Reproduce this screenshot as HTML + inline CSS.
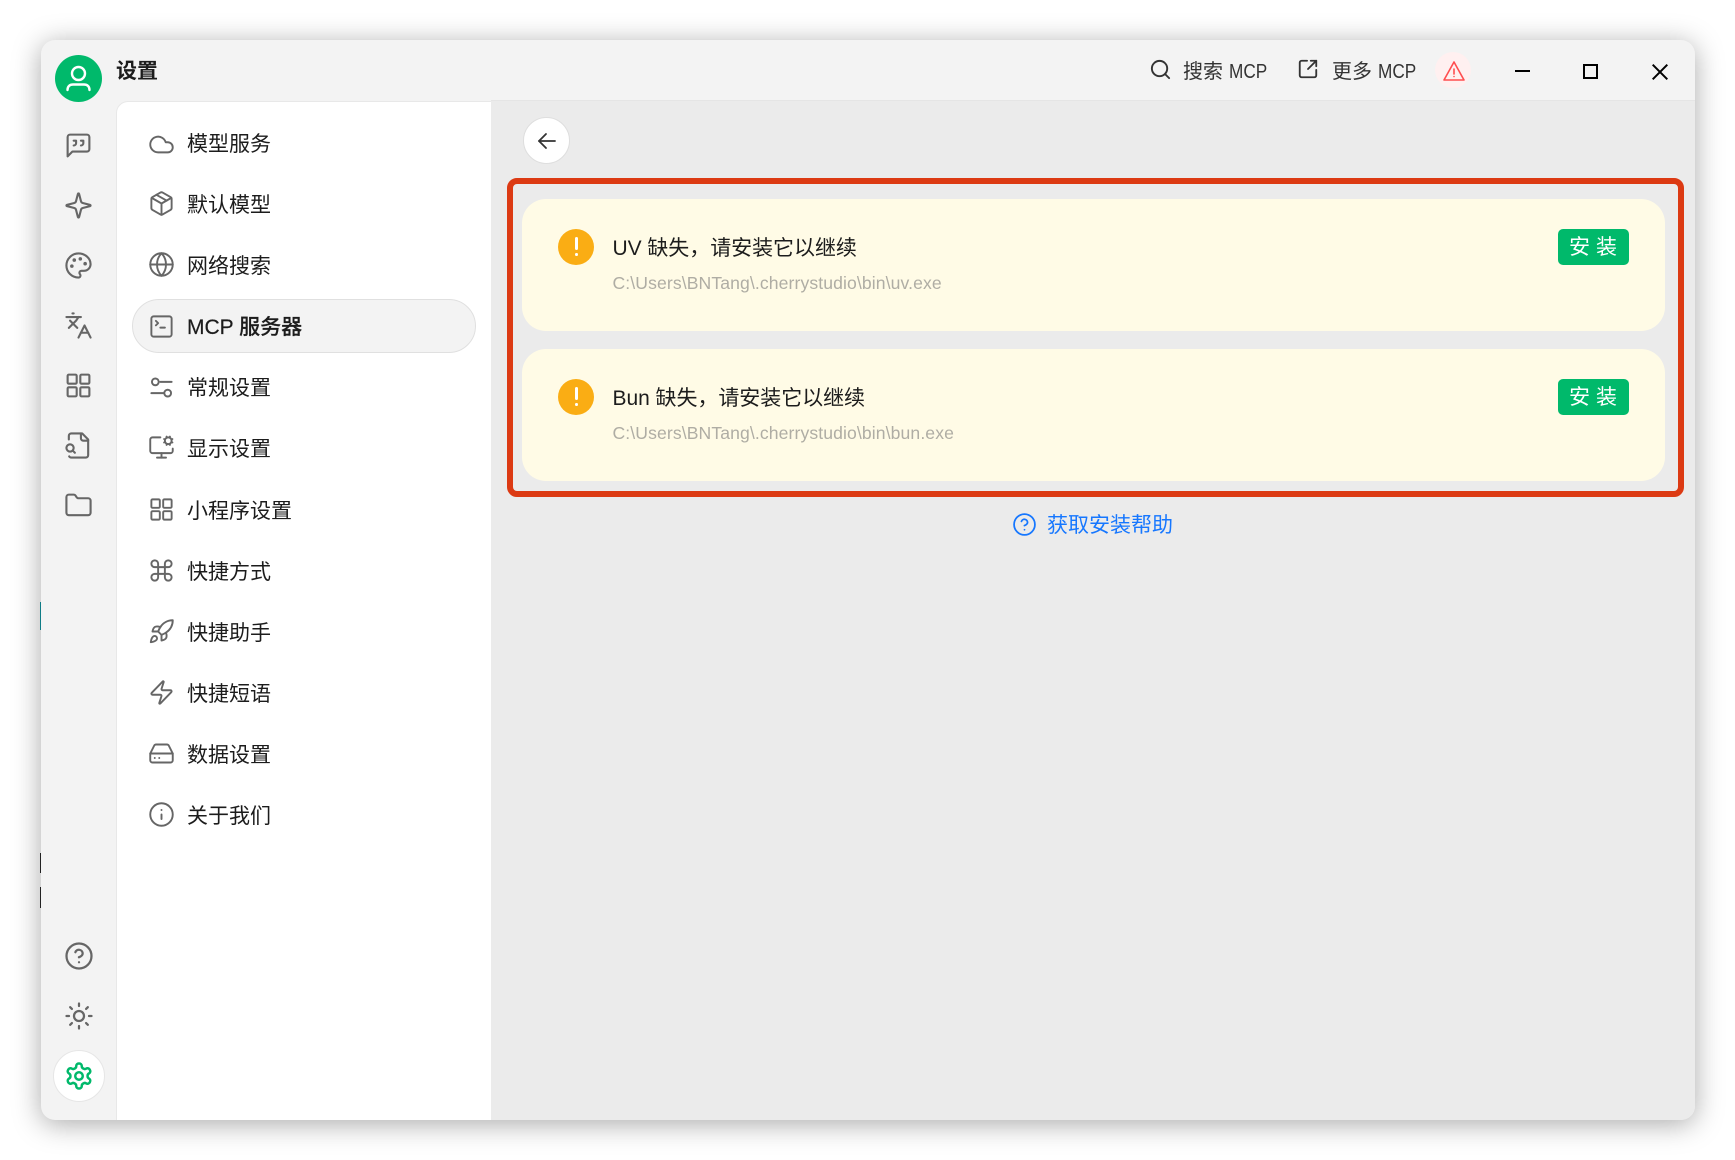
<!DOCTYPE html>
<html lang="zh-CN">
<head>
<meta charset="utf-8">
<title>设置</title>
<style>
html,body{margin:0;padding:0;width:1735px;height:1160px;background:#fff;overflow:hidden}
body{font-family:"Liberation Sans","Noto Sans CJK SC",sans-serif;color:#1c1c1c;position:relative}
*{box-sizing:border-box}
.win{position:absolute;left:41px;top:40px;width:1654px;height:1080px;border-radius:14px;background:#f3f3f3;box-shadow:0 4px 28px rgba(0,0,0,.34);overflow:hidden}
.abs,.t,svg.i{position:absolute}
svg.i{fill:none;stroke-linecap:round;stroke-linejoin:round}
svg.n{width:29px;height:29px;stroke:#666;stroke-width:1.75}
svg.m{width:27px;height:27px;stroke:#666;stroke-width:1.7}
.t{white-space:nowrap;font-size:21px;line-height:30px;height:30px}
.menu{left:187px}
.pane{position:absolute;left:116px;top:100.500px;width:375px;height:1019.500px;background:#fff;border-left:1px solid #e8e8e8;border-top:1px solid #e8e8e8;border-top-left-radius:12px}
.main{position:absolute;left:491px;top:100px;width:1204px;height:1020px;background:#ebebeb;border-top:1px solid #e5e5e5;border-bottom-right-radius:14px}
.card{position:absolute;left:522px;width:1143px;height:132px;background:#fffbe6;border-radius:24px}
.dot{position:absolute;left:558px;width:36px;height:36px;border-radius:50%;background:#faad14}
.dot i{position:absolute;left:17px;top:8px;width:2.500px;height:13px;background:#fff;border-radius:1.5px}
.dot b{position:absolute;left:17px;top:24px;width:2.500px;height:3px;background:#fff;border-radius:50%}
.btn{position:absolute;left:1558px;width:71px;height:36px;background:#00b96b;border-radius:5px;color:#fff;font-size:21px;line-height:38px;text-align:center;letter-spacing:6px;padding-left:5px}
.path{left:612.500px;font-size:17.6px;color:#afada4;letter-spacing:.1px}
</style>
</head>
<body>
<div class="win"></div>
<div class="abs" style="left:40px;top:602px;width:1px;height:28px;background:#0e7c86"></div>
<div class="abs" style="left:40px;top:853px;width:1px;height:20px;background:#222"></div>
<div class="abs" style="left:40px;top:887px;width:1px;height:21px;background:#222"></div>
<div class="pane"></div>
<div class="main"></div>

<!-- avatar -->
<div class="abs" style="left:55px;top:55px;width:47px;height:47px;border-radius:50%;background:#00b96b"></div>
<svg class="i" style="left:62px;top:62px;stroke:#fff;stroke-width:2.4" width="32" height="32" viewBox="0 0 32 32"><circle cx="16.5" cy="11.5" r="6.5"/><path d="M5.500 28c0-4 2.500-5.500 5.500-5.500h11c3 0 5.500 1.500 5.500 5.500"/></svg>
<div class="t" style="left:116px;top:57px;font-weight:700;font-size:21px">设置</div>

<!-- narrow sidebar -->
<svg class="i n" style="left:64px;top:131px" viewBox="0 0 24 24"><path d="M21 15a2 2 0 0 1-2 2H7l-4 4V5a2 2 0 0 1 2-2h14a2 2 0 0 1 2 2z"/><path d="M8 12a2 2 0 0 0 2-2V8H8"/><path d="M14 12a2 2 0 0 0 2-2V8h-2"/></svg>
<svg class="i n" style="left:64px;top:191px" viewBox="0 0 24 24"><path d="M9.937 15.500A2 2 0 0 0 8.500 14.063l-6.135-1.582a.5.5 0 0 1 0-.962L8.500 9.936A2 2 0 0 0 9.937 8.500l1.582-6.135a.5.5 0 0 1 .963 0L14.063 8.500A2 2 0 0 0 15.500 9.937l6.135 1.581a.5.5 0 0 1 0 .964L15.500 14.063a2 2 0 0 0-1.437 1.437l-1.582 6.135a.5.5 0 0 1-.963 0z"/></svg>
<svg class="i n" style="left:64px;top:251px" viewBox="0 0 24 24"><circle cx="13.500" cy="6.500" r=".6" fill="#666"/><circle cx="17.500" cy="10.500" r=".6" fill="#666"/><circle cx="8.500" cy="7.500" r=".6" fill="#666"/><circle cx="6.500" cy="12.500" r=".6" fill="#666"/><path d="M12 2C6.500 2 2 6.500 2 12s4.500 10 10 10c.926 0 1.648-.746 1.648-1.688 0-.437-.18-.835-.437-1.125-.29-.289-.438-.652-.438-1.125a1.640 1.640 0 0 1 1.668-1.668h1.996c3.051 0 5.555-2.503 5.555-5.554C21.965 6.012 17.461 2 12 2z"/></svg>
<svg class="i n" style="left:64px;top:311px" viewBox="0 0 24 24"><path d="m5 8 6 6"/><path d="m4 14 6-6 2-3"/><path d="M2 5h12"/><path d="M7 2h1"/><path d="m22 22-5-10-5 10"/><path d="M14 18h6"/></svg>
<svg class="i n" style="left:64px;top:371px" viewBox="0 0 24 24"><rect x="3" y="3" width="7.500" height="7.500" rx="1"/><rect x="13.500" y="3" width="7.500" height="7.500" rx="1"/><rect x="3" y="13.500" width="7.500" height="7.500" rx="1"/><rect x="13.500" y="13.500" width="7.500" height="7.500" rx="1"/></svg>
<svg class="i n" style="left:64px;top:431px" viewBox="0 0 24 24"><path d="M14 2v4a2 2 0 0 0 2 2h4"/><path d="M4.268 21a2 2 0 0 0 1.727 1H18a2 2 0 0 0 2-2V7l-5-5H6a2 2 0 0 0-2 2v3"/><path d="m9 18-1.500-1.500"/><circle cx="5" cy="14" r="3"/></svg>
<svg class="i n" style="left:64px;top:491px" viewBox="0 0 24 24"><path d="M20 20a2 2 0 0 0 2-2V8a2 2 0 0 0-2-2h-7.900a2 2 0 0 1-1.690-.9L9.600 3.900A2 2 0 0 0 7.930 3H4a2 2 0 0 0-2 2v13a2 2 0 0 0 2 2Z"/></svg>
<svg class="i" style="left:64px;top:941px;width:30px;height:30px;stroke:#666;stroke-width:1.8" viewBox="0 0 24 24"><circle cx="12" cy="12" r="10"/><path d="M9.090 9a3 3 0 0 1 5.830 1c0 2-3 3-3 3"/><path d="M12 17h.01"/></svg>
<svg class="i" style="left:64px;top:1001px;width:30px;height:30px;stroke:#666;stroke-width:1.8" viewBox="0 0 24 24"><circle cx="12" cy="12" r="4"/><path d="M12 2v2"/><path d="M12 20v2"/><path d="m4.930 4.930 1.410 1.410"/><path d="m17.660 17.660 1.410 1.410"/><path d="M2 12h2"/><path d="M20 12h2"/><path d="m6.340 17.660-1.410 1.410"/><path d="m19.070 4.930-1.410 1.410"/></svg>
<div class="abs" style="left:52.500px;top:1050px;width:52px;height:52px;border-radius:50%;background:#fff;border:1px solid #e6e6e6"></div>
<svg class="i" style="left:64px;top:1061px;width:30px;height:30px;stroke:#00b96b;stroke-width:2" viewBox="0 0 24 24"><path d="M12.220 2h-.44a2 2 0 0 0-2 2v.18a2 2 0 0 1-1 1.730l-.43.25a2 2 0 0 1-2 0l-.15-.08a2 2 0 0 0-2.730.73l-.22.38a2 2 0 0 0 .73 2.730l.15.1a2 2 0 0 1 1 1.720v.51a2 2 0 0 1-1 1.740l-.15.09a2 2 0 0 0-.73 2.730l.22.38a2 2 0 0 0 2.730.73l.15-.08a2 2 0 0 1 2 0l.43.25a2 2 0 0 1 1 1.730V20a2 2 0 0 0 2 2h.44a2 2 0 0 0 2-2v-.18a2 2 0 0 1 1-1.730l.43-.25a2 2 0 0 1 2 0l.15.08a2 2 0 0 0 2.730-.73l.22-.39a2 2 0 0 0-.73-2.730l-.15-.08a2 2 0 0 1-1-1.740v-.5a2 2 0 0 1 1-1.740l.15-.09a2 2 0 0 0 .73-2.730l-.22-.38a2 2 0 0 0-2.730-.73l-.15.08a2 2 0 0 1-2 0l-.43-.25a2 2 0 0 1-1-1.730V4a2 2 0 0 0-2-2z"/><circle cx="12" cy="12" r="3"/></svg>

<!-- menu -->
<div class="abs" style="left:132px;top:299px;width:344px;height:54px;border-radius:27px;background:#f3f3f3;border:1px solid #e0e0e0"></div>

<svg class="i m" style="left:148px;top:130.500px" viewBox="0 0 24 24"><path d="M17.500 19H9a7 7 0 1 1 6.710-9h1.790a4.500 4.500 0 1 1 0 9Z"/></svg>
<div class="t menu" style="top:130px">模型服务</div>
<svg class="i m" style="left:148px;top:190px" viewBox="0 0 24 24"><path d="M21 8a2 2 0 0 0-1-1.730l-7-4a2 2 0 0 0-2 0l-7 4A2 2 0 0 0 3 8v8a2 2 0 0 0 1 1.730l7 4a2 2 0 0 0 2 0l7-4A2 2 0 0 0 21 16Z"/><path d="m3.300 7 8.700 5 8.700-5"/><path d="M12 22V12"/><path d="m7.500 4.270 9 5.150"/></svg>
<div class="t menu" style="top:191px">默认模型</div>
<svg class="i m" style="left:148px;top:251px" viewBox="0 0 24 24"><circle cx="12" cy="12" r="10"/><path d="M12 2a14.500 14.500 0 0 0 0 20 14.500 14.500 0 0 0 0-20"/><path d="M2 12h20"/></svg>
<div class="t menu" style="top:252px">网络搜索</div>
<svg class="i m" style="left:148px;top:312.500px" viewBox="0 0 24 24"><path d="m7 11 2-2-2-2"/><path d="M11 13h4"/><rect x="3" y="3" width="18" height="18" rx="2"/></svg>
<div class="t menu" style="top:313px;font-weight:500;-webkit-text-stroke:.2px #1c1c1c">MCP 服务器</div>
<svg class="i m" style="left:148px;top:374px" viewBox="0 0 24 24"><path d="M21 7h-10"/><path d="M14 17H3"/><circle cx="6.500" cy="7" r="3"/><circle cx="17.500" cy="17" r="3"/></svg>
<div class="t menu" style="top:374px">常规设置</div>
<svg class="i m" style="left:148px;top:434px" viewBox="0 0 24 24"><path d="M12 17v4"/><path d="m15.200 4.900-.9-.4"/><path d="m15.200 7.100-.9.4"/><path d="m16.900 3.200-.4-.9"/><path d="m16.900 8.800-.4.9"/><path d="m19.500 2.300-.4.9"/><path d="m19.500 9.700-.4-.9"/><path d="m21.700 4.500-.9.4"/><path d="m21.700 7.500-.9-.4"/><path d="M22 13v2a2 2 0 0 1-2 2H4a2 2 0 0 1-2-2V5a2 2 0 0 1 2-2h7"/><path d="M8 21h8"/><circle cx="18" cy="6" r="3"/></svg>
<div class="t menu" style="top:435px">显示设置</div>
<svg class="i m" style="left:148px;top:496px" viewBox="0 0 24 24"><rect x="3" y="3" width="7.500" height="7.500" rx="1"/><rect x="13.500" y="3" width="7.500" height="7.500" rx="1"/><rect x="3" y="13.500" width="7.500" height="7.500" rx="1"/><rect x="13.500" y="13.500" width="7.500" height="7.500" rx="1"/></svg>
<div class="t menu" style="top:497px">小程序设置</div>
<svg class="i m" style="left:148px;top:557px" viewBox="0 0 24 24"><path d="M15 6v12a3 3 0 1 0 3-3H6a3 3 0 1 0 3 3V6a3 3 0 1 0-3 3h12a3 3 0 1 0-3-3"/></svg>
<div class="t menu" style="top:558px">快捷方式</div>
<svg class="i m" style="left:148px;top:618px" viewBox="0 0 24 24"><path d="M4.500 16.500c-1.500 1.260-2 5-2 5s3.740-.5 5-2c.71-.84.7-2.130-.09-2.910a2.180 2.180 0 0 0-2.910-.09z"/><path d="m12 15-3-3a22 22 0 0 1 2-3.950A12.880 12.880 0 0 1 22 2c0 2.720-.78 7.500-6 11a22.350 22.350 0 0 1-4 2z"/><path d="M9 12H4s.55-3.030 2-4c1.620-1.080 5 0 5 0"/><path d="M12 15v5s3.030-.55 4-2c1.080-1.620 0-5 0-5"/></svg>
<div class="t menu" style="top:619px">快捷助手</div>
<svg class="i m" style="left:148px;top:678.500px" viewBox="0 0 24 24"><path d="M4 14a1 1 0 0 1-.78-1.630l9.900-10.200a.5.5 0 0 1 .86.46l-1.920 6.020A1 1 0 0 0 13 10h7a1 1 0 0 1 .78 1.630l-9.900 10.200a.5.5 0 0 1-.86-.46l1.920-6.020A1 1 0 0 0 11 14z"/></svg>
<div class="t menu" style="top:680px">快捷短语</div>
<svg class="i m" style="left:148px;top:740px" viewBox="0 0 24 24"><path d="M22 12H2"/><path d="M5.450 5.110 2 12v6a2 2 0 0 0 2 2h16a2 2 0 0 0 2-2v-6l-3.450-6.890A2 2 0 0 0 16.760 4H7.240a2 2 0 0 0-1.790 1.110z"/><path d="M6 16h.01"/><path d="M10 16h.01"/></svg>
<div class="t menu" style="top:741px">数据设置</div>
<svg class="i m" style="left:148px;top:800.500px" viewBox="0 0 24 24"><circle cx="12" cy="12" r="10"/><path d="M12 16v-4"/><path d="M12 8h.01"/></svg>
<div class="t menu" style="top:801.500px">关于我们</div>

<!-- titlebar right -->
<svg class="i" style="left:1149px;top:58px;width:23px;height:23px;stroke:#333;stroke-width:2" viewBox="0 0 24 24"><circle cx="11" cy="11" r="8"/><path d="m21 21-4.300-4.300"/></svg>
<div class="t" style="left:1183px;top:57px;font-size:20px;color:#333">搜索 <span style="display:inline-block;transform:scaleX(.86);transform-origin:left">MCP</span></div>
<svg class="i" style="left:1297px;top:58px;width:22px;height:22px;stroke:#333;stroke-width:2" viewBox="0 0 24 24"><path d="M21 13v6a2 2 0 0 1-2 2H5a2 2 0 0 1-2-2V5a2 2 0 0 1 2-2h6"/><path d="m21 3-9 9"/><path d="M15 3h6v6"/></svg>
<div class="t" style="left:1332px;top:57px;font-size:20px;color:#333">更多 <span style="display:inline-block;transform:scaleX(.86);transform-origin:left">MCP</span></div>
<div class="abs" style="left:1435px;top:52px;width:36px;height:36px;border-radius:50%;background:#fff0f0"></div>
<svg class="i" style="left:1442px;top:59px;width:24px;height:24px;stroke:#ff4d4f;stroke-width:1.6" viewBox="0 0 24 24"><path d="M12 3 2 21h20z"/><path d="M12 10v5"/><path d="M12 17.500h.01"/></svg>
<div class="abs" style="left:1515px;top:70px;width:15px;height:2px;background:#000"></div>
<div class="abs" style="left:1583px;top:64px;width:15px;height:15px;border:2px solid #000"></div>
<svg class="i" style="left:1651.500px;top:64px;stroke:#000;stroke-width:2;stroke-linecap:butt" width="16" height="16" viewBox="0 0 16 16"><path d="M.7.700 15.300 15.300M15.300.700.7 15.300"/></svg>

<!-- back -->
<div class="abs" style="left:522.500px;top:116.500px;width:47px;height:47px;border-radius:50%;background:#fff;border:1px solid #dedede"></div>
<svg class="i" style="left:534px;top:129px;width:24px;height:24px;stroke:#333;stroke-width:1.8" viewBox="0 0 24 24"><path d="m12 19-7-7 7-7"/><path d="M21 12H5"/></svg>

<!-- cards -->
<div class="abs" style="left:507px;top:178px;width:1177px;height:319px;border:6px solid #dc3a13;border-radius:10px"></div>
<div class="card" style="top:199px"></div>
<div class="dot" style="top:229px"><i></i><b></b></div>
<div class="t" style="left:612.500px;top:234px;letter-spacing:-.05px">UV 缺失，请安装它以继续</div>
<div class="t path" style="top:268px">C:\Users\BNTang\.cherrystudio\bin\uv.exe</div>
<div class="btn" style="top:229px">安装</div>

<div class="card" style="top:349px"></div>
<div class="dot" style="top:379px"><i></i><b></b></div>
<div class="t" style="left:612.500px;top:384px;letter-spacing:-.05px">Bun 缺失，请安装它以继续</div>
<div class="t path" style="top:418px">C:\Users\BNTang\.cherrystudio\bin\bun.exe</div>
<div class="btn" style="top:379px">安装</div>

<!-- help -->
<svg class="i" style="left:1012px;top:511.500px;width:25px;height:25px;stroke:#1677ff;stroke-width:1.7" viewBox="0 0 24 24"><circle cx="12" cy="12" r="10"/><path d="M9.090 9a3 3 0 0 1 5.830 1c0 2-3 3-3 3"/><path d="M12 17h.01"/></svg>
<div class="t" style="left:1047px;top:511px;color:#1677ff">获取安装帮助</div>
</body>
</html>
